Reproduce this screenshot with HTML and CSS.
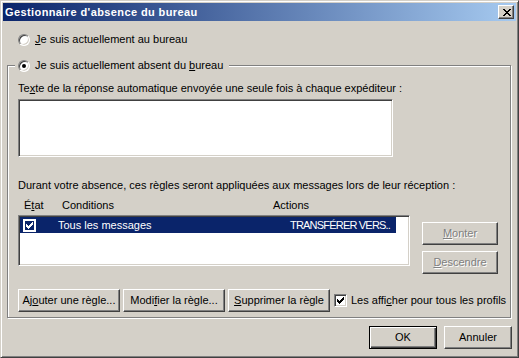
FILE: index.html
```html
<!DOCTYPE html>
<html lang="fr">
<head>
<meta charset="utf-8">
<title>Gestionnaire d'absence du bureau</title>
<link rel="stylesheet" href="styles.css">
</head>
<body>
<div class="window">
  <div class="titlebar">
    <span class="title">Gestionnaire d'absence du bureau</span>
    <span class="close-btn">
      <svg width="8" height="7" viewBox="0 0 8 7" shape-rendering="crispEdges"><path fill="#000" d="M0 0h2v1h-2z M6 0h2v1h-2z M1 1h2v1h-2z M5 1h2v1h-2z M2 2h4v1h-4z M3 3h2v1h-2z M2 4h4v1h-4z M1 5h2v1h-2z M5 5h2v1h-2z M0 6h2v1h-2z M6 6h2v1h-2z"/></svg>
    </span>
  </div>
  <div class="client">
    <div class="option-row">
      <span class="radio"></span>
      <span><u>J</u>e suis actuellement au bureau</span>
    </div>
    <div class="group">
      <div class="legend">
        <span class="radio checked"></span>
        <span>Je suis actuellement absent du <u>b</u>ureau</span>
      </div>
      <div class="label label-reply">Te<u>x</u>te de la réponse automatique envoyée une seule fois à chaque expéditeur :</div>
      <div class="textfield"></div>
      <div class="label label-rules">Durant votre absence, ces règles seront appliquées aux messages lors de leur réception :</div>
      <div class="rules">
        <div class="rules-list">
          <div class="list-header">
            <span>É<u>t</u>at</span>
            <span>Conditions</span>
            <span>Actions</span>
          </div>
          <div class="listbox">
            <div class="list-row selected">
              <span class="cell-check">
                <span class="check-sel">
                  <svg width="7" height="7" viewBox="0 0 7 7" shape-rendering="crispEdges"><path fill="#fff" d="M0 2h1v3h-1z M1 3h1v3h-1z M2 4h1v3h-1z M3 3h1v3h-1z M4 2h1v3h-1z M5 1h1v3h-1z M6 0h1v3h-1z"/></svg>
                </span>
              </span>
              <span>Tous les messages</span>
              <span class="cell-action">TRANSFÉRER VERS..</span>
            </div>
          </div>
        </div>
        <div class="side-buttons">
          <span class="btn btn-side disabled"><u>M</u>onter</span>
          <span class="btn btn-side disabled"><u>D</u>escendre</span>
        </div>
      </div>
      <div class="bottom-row">
        <span class="btn btn-rule">Aj<u>o</u>uter une règle...</span>
        <span class="btn btn-rule">Modi<u>f</u>ier la règle...</span>
        <span class="btn btn-rule"><u>S</u>upprimer la règle</span>
        <span class="check-row">
          <span class="checkbox">
            <svg width="7" height="7" viewBox="0 0 7 7" shape-rendering="crispEdges"><path fill="#000" d="M0 2h1v3h-1z M1 3h1v3h-1z M2 4h1v3h-1z M3 3h1v3h-1z M4 2h1v3h-1z M5 1h1v3h-1z M6 0h1v3h-1z"/></svg>
          </span>
          <span>Les affi<u>c</u>her pour tous les profils</span>
        </span>
      </div>
    </div>
    <div class="dialog-buttons">
      <span class="btn btn-dialog default">OK</span>
      <span class="btn btn-dialog">Annuler</span>
    </div>
  </div>
</div>
</body>
</html>
```

FILE: styles.css
```css
html, body {
  margin: 0;
  padding: 0;
  background: #D4D0C8;
}

body {
  font-family: "Liberation Sans", Arial, sans-serif;
  font-size: 11px;
  line-height: 13px;
  color: #000;
}

u {
  text-decoration: underline;
  text-underline-offset: 1px;
}

.window {
  width: 519px;
  height: 358px;
  box-sizing: border-box;
  background: #D4D0C8;
  border: 1px solid;
  border-color: #D4D0C8 #404040 #404040 #D4D0C8;
  box-shadow: inset 1px 1px 0 #fff, inset -1px -1px 0 #808080;
  padding: 2px;
}

.titlebar {
  height: 18px;
  display: flex;
  align-items: center;
  padding: 0 2px;
  background: linear-gradient(to right, #0A246A, #A6CAF0);
}

.title {
  flex: 1;
  color: #fff;
  font-weight: bold;
  font-size: 11px;
  letter-spacing: 0.4px;
  white-space: nowrap;
}

.close-btn {
  width: 16px;
  height: 14px;
  box-sizing: border-box;
  display: flex;
  align-items: center;
  justify-content: center;
  padding-left: 1px;
  background: #D4D0C8;
  border: 1px solid;
  border-color: #fff #404040 #404040 #fff;
  box-shadow: inset -1px -1px 0 #808080;
}

.close-btn svg {
  display: block;
}

.client {
  display: flex;
  flex-direction: column;
}

.option-row {
  display: flex;
  align-items: center;
  gap: 5px;
  height: 13px;
  margin: 12px 0 0 15px;
}

.radio {
  width: 12px;
  height: 12px;
  box-sizing: border-box;
  border-radius: 50%;
  border: 1px solid;
  border-color: #808080 #fff #fff #808080;
  box-shadow: inset 1px 1px 0 #404040, inset -1px -1px 0 #D4D0C8;
  background: #fff;
  display: flex;
  align-items: center;
  justify-content: center;
  flex: none;
}

.radio.checked::after {
  content: "";
  width: 4px;
  height: 4px;
  border-radius: 50%;
  background: #000;
}

.group {
  margin: 19px 5px 0 4px;
  height: 253px;
  box-sizing: border-box;
  border: 1px solid #808080;
  box-shadow: inset 1px 1px 0 #fff, 1px 1px 0 #fff;
  padding: 0 0 0 10px;
  display: flex;
  flex-direction: column;
}

.legend {
  display: flex;
  align-items: center;
  gap: 5px;
  height: 13px;
  width: max-content;
  margin: -7px 0 0 -3px;
  padding: 0 6px 0 3px;
  background: #D4D0C8;
}

.label {
  height: 13px;
  white-space: nowrap;
}

.label-reply {
  margin-top: 10px;
}

.textfield {
  margin-top: 4px;
  width: 375px;
  height: 58px;
  box-sizing: border-box;
  background: #fff;
  border: 1px solid;
  border-color: #808080 #fff #fff #808080;
  box-shadow: inset 1px 1px 0 #404040, inset -1px -1px 0 #D4D0C8;
}

.label-rules {
  margin-top: 22px;
}

.rules {
  display: flex;
  gap: 12px;
  margin-top: 7px;
}

.rules-list {
  width: 392px;
}

.list-header {
  display: grid;
  grid-template-columns: 38px 211px auto;
  padding-left: 6px;
  height: 13px;
  white-space: nowrap;
}

.listbox {
  margin-top: 3px;
  height: 51px;
  box-sizing: border-box;
  background: #fff;
  border: 1px solid;
  border-color: #808080 #fff #fff #808080;
  box-shadow: inset 1px 1px 0 #404040, inset -1px -1px 0 #D4D0C8;
  padding: 1px;
}

.list-row {
  width: 376px;
  height: 16px;
  box-sizing: border-box;
  display: grid;
  grid-template-columns: 35px 232px 1fr;
  align-items: center;
  padding-left: 3px;
  white-space: nowrap;
}

.cell-action {
  letter-spacing: -0.8px;
}

.list-row.selected {
  background: #0A246A;
  color: #fff;
}

.cell-check {
  display: flex;
  align-items: center;
}

.check-sel {
  width: 13px;
  height: 13px;
  box-sizing: border-box;
  border: 2px solid #fff;
  background: #0A246A;
  display: flex;
  align-items: center;
  justify-content: center;
}

.check-sel svg,
.checkbox svg {
  display: block;
}

.side-buttons {
  display: flex;
  flex-direction: column;
  gap: 6px;
  padding-top: 23px;
}

.btn {
  box-sizing: border-box;
  height: 23px;
  display: flex;
  align-items: center;
  justify-content: center;
  background: #D4D0C8;
  border: 1px solid;
  border-color: #fff #404040 #404040 #fff;
  box-shadow: inset -1px -1px 0 #808080;
  white-space: nowrap;
}

.btn.default {
  border-color: #000;
  box-shadow: inset 1px 1px 0 #fff, inset -1px -1px 0 #404040, inset -2px -2px 0 #808080;
}

.btn.disabled {
  color: #808080;
  text-shadow: 1px 1px 0 #fff;
}

.btn-side {
  width: 76px;
}

.bottom-row {
  display: flex;
  align-items: center;
  gap: 3px;
  margin-top: 15px;
}

.btn-rule {
  width: 102px;
}

.check-row {
  display: flex;
  align-items: center;
  gap: 4px;
  margin-left: 1px;
  white-space: nowrap;
}

.checkbox {
  width: 13px;
  height: 13px;
  box-sizing: border-box;
  background: #fff;
  border: 1px solid;
  border-color: #808080 #fff #fff #808080;
  box-shadow: inset 1px 1px 0 #404040, inset -1px -1px 0 #D4D0C8;
  display: flex;
  align-items: center;
  justify-content: center;
}

.dialog-buttons {
  display: flex;
  justify-content: flex-end;
  gap: 7px;
  margin: 8px 4px 0 0;
}

.btn-dialog {
  width: 68px;
}
```
